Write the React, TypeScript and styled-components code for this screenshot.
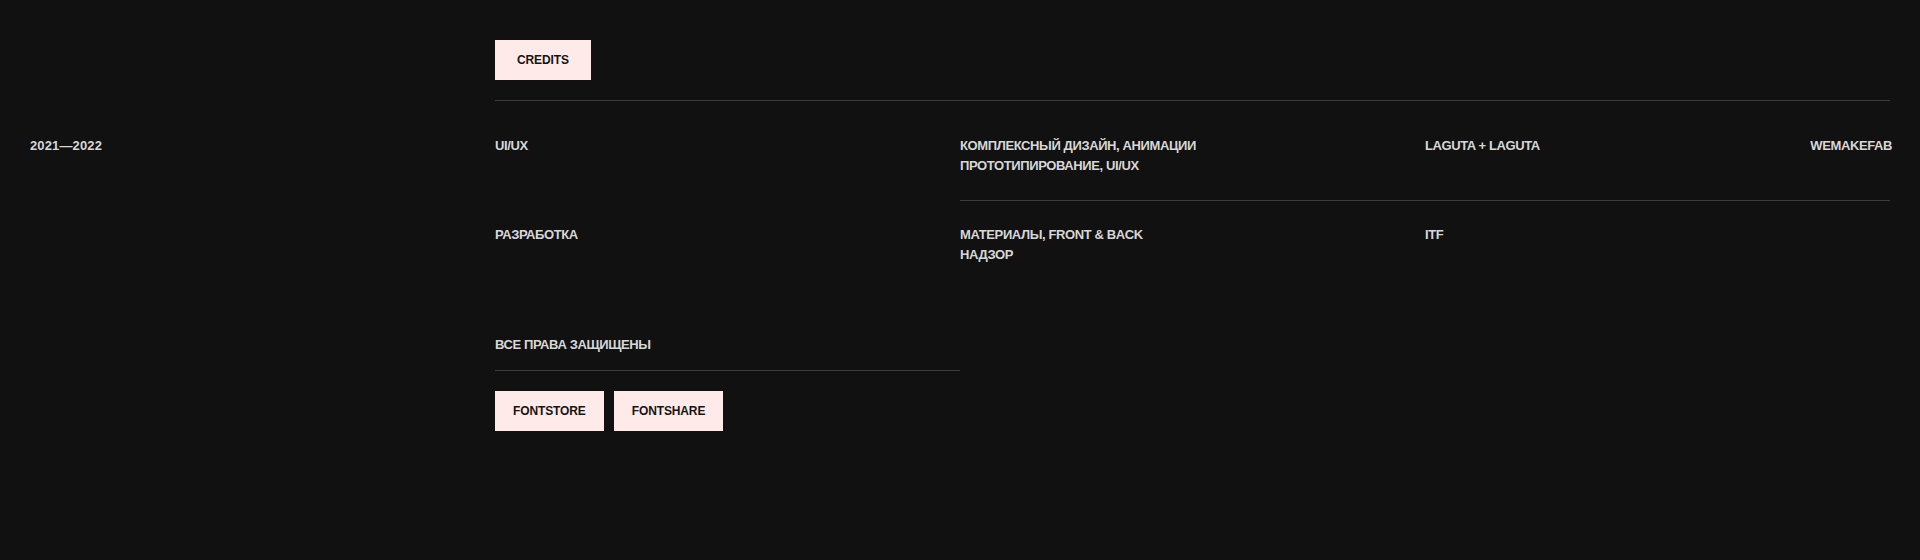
import React from 'react';
import styled, { createGlobalStyle } from 'styled-components';

const GlobalStyle = createGlobalStyle`
  html, body {
    margin: 0;
    padding: 0;
    background: #111111;
  }
  body {
    font-family: 'Liberation Sans', Arial, sans-serif;
    color: #d7d7d7;
  }
`;

const credits = [
  {
    role: 'UI/UX',
    desc: ['КОМПЛЕКСНЫЙ ДИЗАЙН, АНИМАЦИИ', 'ПРОТОТИПИРОВАНИЕ, UI/UX'],
    studios: ['LAGUTA + LAGUTA', 'WEMAKEFAB'],
  },
  {
    role: 'РАЗРАБОТКА',
    desc: ['МАТЕРИАЛЫ, FRONT & BACK', 'НАДЗОР'],
    studios: ['ITF'],
  },
];

const Footer = styled.footer`
  display: grid;
  grid-template-columns: repeat(4, 1fr);
  padding: 40px 30px 120px;
  box-sizing: border-box;
  width: 100%;
`;

const Header = styled.div`
  grid-column: 2 / 5;
  padding-bottom: 20px;
  border-bottom: 1px solid #3d3d3d;
`;

const Label = styled.div`
  font-size: 13px;
  line-height: 20px;
  font-weight: 700;
  letter-spacing: -0.03em;
  text-transform: uppercase;
  white-space: nowrap;
`;

const Year = styled(Label)`
  grid-column: 1;
  padding-top: 35px;
  letter-spacing: 0.01em;
`;

const Credits = styled.div`
  grid-column: 2 / 5;
  display: grid;
  grid-template-columns: repeat(3, 1fr);
`;

const Cell = styled.div<{ $top: number }>`
  padding-top: ${(p) => p.$top}px;
`;

const Studios = styled(Cell)`
  display: flex;
  justify-content: space-between;
  margin-right: -2px;
`;

const Divider = styled.div<{ $from: number; $to: number }>`
  grid-column: ${(p) => p.$from} / ${(p) => p.$to};
  height: 1px;
  margin-top: 24px;
  background: #3d3d3d;
`;

const Rights = styled.div`
  grid-column: 2;
  margin-top: 70px;
  padding-bottom: 15px;
  border-bottom: 1px solid #3d3d3d;
`;

const Links = styled.div`
  grid-column: 2;
  display: flex;
  gap: 10px;
  margin-top: 20px;
`;

const Button = styled.a<{ $pad?: number }>`
  display: inline-flex;
  align-items: center;
  justify-content: center;
  height: 40px;
  padding: 0 ${(p) => p.$pad ?? 18}px;
  background: #ffeaea;
  color: #141414;
  font-size: 12px;
  font-weight: 700;
  letter-spacing: -0.01em;
  text-decoration: none;
  text-transform: uppercase;
  cursor: pointer;
`;

const App: React.FC = () => {
  return (
    <>
      <GlobalStyle />
      <Footer>
        <Header>
          <Button $pad={22}>Credits</Button>
        </Header>

        <Year>2021—2022</Year>

        <Credits>
          {credits.map((row, i) => {
            const top = i === 0 ? 35 : 24;
            return (
              <React.Fragment key={row.role}>
                {i > 0 && <Divider $from={2} $to={4} />}
                <Cell $top={top}>
                  <Label>{row.role}</Label>
                </Cell>
                <Cell $top={top}>
                  {row.desc.map((line) => (
                    <Label key={line}>{line}</Label>
                  ))}
                </Cell>
                <Studios $top={top}>
                  {row.studios.map((s) => (
                    <Label key={s}>{s}</Label>
                  ))}
                </Studios>
              </React.Fragment>
            );
          })}
        </Credits>

        <Rights>
          <Label>Все права защищены</Label>
        </Rights>

        <Links>
          <Button>Fontstore</Button>
          <Button>Fontshare</Button>
        </Links>
      </Footer>
    </>
  );
};

export default App;
